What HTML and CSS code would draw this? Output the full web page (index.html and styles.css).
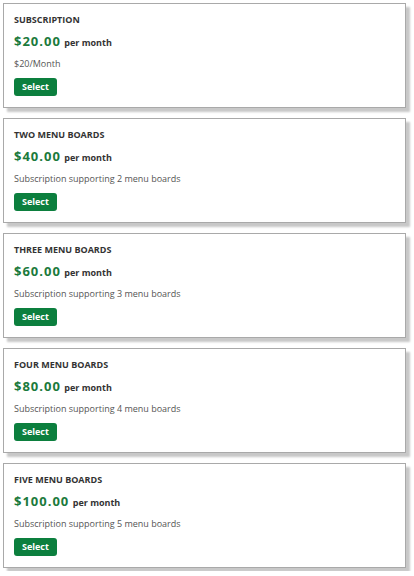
FILE: index.html
```html
<!DOCTYPE html>
<html lang="en">
<head>
<meta charset="utf-8">
<title>Subscriptions</title>
<link rel="stylesheet" href="styles.css">
</head>
<body>
<div class="plans">
  <div class="card">
    <div class="title">SUBSCRIPTION</div>
    <div class="price"><span class="amount">$20.00</span> <span class="period">per month</span></div>
    <div class="desc">$20/Month</div>
    <button class="select">Select</button>
  </div>
  <div class="card">
    <div class="title">TWO MENU BOARDS</div>
    <div class="price"><span class="amount">$40.00</span> <span class="period">per month</span></div>
    <div class="desc">Subscription supporting 2 menu boards</div>
    <button class="select">Select</button>
  </div>
  <div class="card">
    <div class="title">THREE MENU BOARDS</div>
    <div class="price"><span class="amount">$60.00</span> <span class="period">per month</span></div>
    <div class="desc">Subscription supporting 3 menu boards</div>
    <button class="select">Select</button>
  </div>
  <div class="card">
    <div class="title">FOUR MENU BOARDS</div>
    <div class="price"><span class="amount">$80.00</span> <span class="period">per month</span></div>
    <div class="desc">Subscription supporting 4 menu boards</div>
    <button class="select">Select</button>
  </div>
  <div class="card">
    <div class="title">FIVE MENU BOARDS</div>
    <div class="price"><span class="amount">$100.00</span> <span class="period">per month</span></div>
    <div class="desc">Subscription supporting 5 menu boards</div>
    <button class="select">Select</button>
  </div>
</div>
</body>
</html>
```
FILE: styles.css
```css
html, body {
  margin: 0;
  padding: 0;
  background: #fff;
}
body {
  font-family: "Open Sans", "Liberation Sans", sans-serif;
  color: #333;
}
.plans {
  padding: 3px 8px 3px 3px;
  display: flex;
  flex-direction: column;
  gap: 10px;
}
.card {
  border: 1px solid #a9a9a9;
  box-shadow: 4px 4px 2px #c8c8c8;
  padding: 10px 10px 11px 10px;
  display: flex;
  flex-direction: column;
  align-items: flex-start;
  background: #fff;
}
.title {
  font-size: 9px;
  font-weight: 700;
  line-height: 12px;
  color: #333;
  margin-bottom: 6px;
}
.price {
  font-size: 13px;
  line-height: 18px;
  white-space: nowrap;
}
.amount {
  font-size: 13px;
  font-weight: 700;
  color: #1b7a3c;
  letter-spacing: 1px;
}
.period {
  font-size: 9px;
  line-height: 10px;
  font-weight: 700;
  color: #333;
}
.desc {
  font-size: 9px;
  line-height: 13px;
  color: #555;
  margin-top: 7px;
}
.select {
  margin-top: 8px;
  font-family: inherit;
  font-size: 9px;
  font-weight: 700;
  color: #fff;
  background: #0c7f3e;
  border: none;
  border-radius: 3px;
  height: 18px;
  padding: 0 8px;
  line-height: 18px;
}
```
